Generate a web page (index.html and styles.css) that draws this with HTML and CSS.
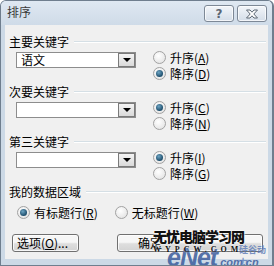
FILE: index.html
```html
<html lang="zh">
  <head>
    <meta charset="UTF-8" />
    <title>排序</title>
    <link rel="stylesheet" href="styles.css">
  </head>
  <body>
    <div class="window">
      <div class="titlebar">
        <span class="title">排序</span>
        <div class="caps">
          <span class="cap">?</span>
          <span class="cap">
            <svg width="14" height="10" viewBox="0 0 14 10">
              <path d="M1.5 1 H5 L7 3.2 L9 1 H12.5 L8.8 5 L12.5 9 H9 L7 6.8 L5 9 H1.5 L5.2 5 Z" fill="#fff" stroke="#5b6673" stroke-width="1" stroke-linejoin="round"/>
            </svg>
          </span>
        </div>
      </div>

      <div class="body">
        <div class="group">
          <div class="legend">主要关键字</div>
          <div class="row">
            <div class="combo"><span class="value">语文</span><span class="drop"></span></div>
            <div class="choices">
              <div class="radio"><span class="dot"></span>升序(<u>A</u>)</div>
              <div class="radio on"><span class="dot"></span>降序(<u>D</u>)</div>
            </div>
          </div>
        </div>

        <div class="group">
          <div class="legend">次要关键字</div>
          <div class="row">
            <div class="combo"><span class="value"></span><span class="drop"></span></div>
            <div class="choices">
              <div class="radio on"><span class="dot"></span>升序(<u>C</u>)</div>
              <div class="radio"><span class="dot"></span>降序(<u>N</u>)</div>
            </div>
          </div>
        </div>

        <div class="group">
          <div class="legend">第三关键字</div>
          <div class="row">
            <div class="combo"><span class="value"></span><span class="drop"></span></div>
            <div class="choices">
              <div class="radio on"><span class="dot"></span>升序(<u>I</u>)</div>
              <div class="radio"><span class="dot"></span>降序(<u>G</u>)</div>
            </div>
          </div>
        </div>

        <div class="group">
          <div class="legend">我的数据区域</div>
          <div class="area">
            <div class="radio on"><span class="dot"></span>有标题行(<u>R</u>)</div>
            <div class="radio"><span class="dot"></span>无标题行(<u>W</u>)</div>
          </div>
        </div>

        <div class="actions">
          <button class="btn">选项(<u>O</u>)...</button>
          <button class="btn ok">确定</button>
        </div>
      </div>

      <!-- watermarks over the dialog -->
      <div class="enet">eNet<span class="cn">com.cn</span></div>
      <div class="enet-tag">硅谷动力</div>
      <div class="mark">
        <div class="mark-cn">无忧电脑学习网</div>
        <div class="mark-en">WYPCW.COM</div>
      </div>
    </div>
  </body>
</html>
```

FILE: styles.css
```css
body {
  margin: 0;
  background: #fff;
}
body,
button {
  font-family: "Noto Sans CJK SC", "Liberation Sans", sans-serif;
  font-size: 12px;
}
.window {
  position: relative;
  width: 274px;
  height: 266px;
  box-sizing: border-box;
  display: flex;
  flex-direction: column;
  background: #ccd9e6;
  border: 1px solid #6f7e8e;
  border-right-width: 2px;
  border-radius: 6px 6px 0 0;
  overflow: hidden;
}
.titlebar {
  height: 24px;
  flex: none;
  display: flex;
  justify-content: space-between;
  align-items: flex-start;
  padding: 0 5px 0 6px;
  background: linear-gradient(#dfe8f2, #cfdbe8);
}
.title {
  color: #3a3a3a;
  line-height: 22px;
}
.caps {
  display: flex;
  gap: 3px;
  margin-top: 4px;
}
.cap {
  width: 28px;
  height: 15px;
  display: flex;
  align-items: center;
  justify-content: center;
  border: 1px solid #7d8896;
  border-radius: 3px;
  background: linear-gradient(#f3f6fa, #d4dde8);
  box-shadow: inset 0 0 0 1px rgba(255, 255, 255, 0.7);
  color: #5b6673;
  font: bold 12px "DejaVu Sans", sans-serif;
}
.body {
  flex: 1;
  margin: 0 4px 6px 4px;
  padding: 9px 2px 0 4px;
  background: #f0f0f0;
  color: #000;
}
.group {
  margin-bottom: 3px;
}
.legend {
  display: flex;
  align-items: center;
  height: 15px;
  line-height: 15px;
}
.legend::after {
  content: "";
  flex: 1;
  margin-left: 5px;
  border-top: 1px solid #d5dfe5;
  border-bottom: 1px solid #fff;
}
.row {
  display: flex;
  align-items: flex-start;
}
.combo {
  width: 120px;
  height: 16px;
  box-sizing: border-box;
  margin: 3px 0 0 7px;
  display: flex;
  border: 1px solid #8d8d8d;
  background: #fff;
}
.value {
  flex: 1;
  padding-left: 4px;
  line-height: 14px;
}
.drop {
  width: 17px;
  box-sizing: border-box;
  border: 1px solid #7a7a7a;
  background: linear-gradient(#f4f4f4, #d9d9d9);
  display: flex;
  align-items: center;
  justify-content: center;
}
.drop::before {
  content: "";
  border-left: 4px solid transparent;
  border-right: 4px solid transparent;
  border-top: 4px solid #000;
}
.choices {
  margin-left: 17px;
}
.radio {
  display: flex;
  align-items: center;
  height: 16px;
  white-space: nowrap;
}
.radio u {
  text-underline-offset: 1px;
}
.dot {
  width: 11px;
  height: 11px;
  margin-right: 4px;
  border: 1px solid #a2a2a2;
  border-radius: 50%;
  background: radial-gradient(circle at 40% 35%, #fff, #dedede);
  display: flex;
  align-items: center;
  justify-content: center;
}
.radio.on .dot::before {
  content: "";
  width: 7px;
  height: 7px;
  border-radius: 50%;
  background: radial-gradient(circle at 40% 35%, #6ea5c4, #1d4d6b 70%);
}
.area {
  display: flex;
  gap: 17px;
  margin: 5px 0 0 8px;
}
.actions {
  display: flex;
  gap: 38px;
  margin: 14px 0 0 3px;
}
.btn {
  height: 18px;
  padding: 0 0 0 4px;
  border: 1px solid #707070;
  border-radius: 3px;
  background: linear-gradient(#f6f6f6 45%, #dedede 55%, #d3d3d3);
  box-shadow: inset 0 0 0 1px rgba(255, 255, 255, 0.8);
  text-align: left;
  line-height: 14px;
  width: 67px;
}
.ok {
  width: 146px;
  padding-left: 20px;
}
.enet {
  position: absolute;
  left: 166px;
  top: 244px;
  color: #3b5c9c;
  font: bold italic 25px "Liberation Sans", sans-serif;
  letter-spacing: -1px;
  line-height: 24px;
  opacity: 0.85;
}
.enet .cn {
  font-size: 11px;
  letter-spacing: 0;
  margin-left: 3px;
}
.enet-tag {
  position: absolute;
  left: 238px;
  top: 242px;
  color: #5a7ab8;
  font: bold 9px "Noto Sans CJK SC", sans-serif;
  opacity: 0.8;
}
.mark {
  position: absolute;
  left: 152px;
  top: 225px;
}
.mark-cn {
  color: #111;
  font: 900 14px "Noto Sans CJK SC", sans-serif;
  line-height: 20px;
  letter-spacing: -1px;
  text-shadow: 0 0 2px #fff, 0 0 2px #fff;
}
.mark-en {
  color: #111;
  font: bold 8px "Liberation Serif", serif;
  letter-spacing: 4px;
  line-height: 8px;
  text-shadow: 0 0 2px #fff;
}
```
